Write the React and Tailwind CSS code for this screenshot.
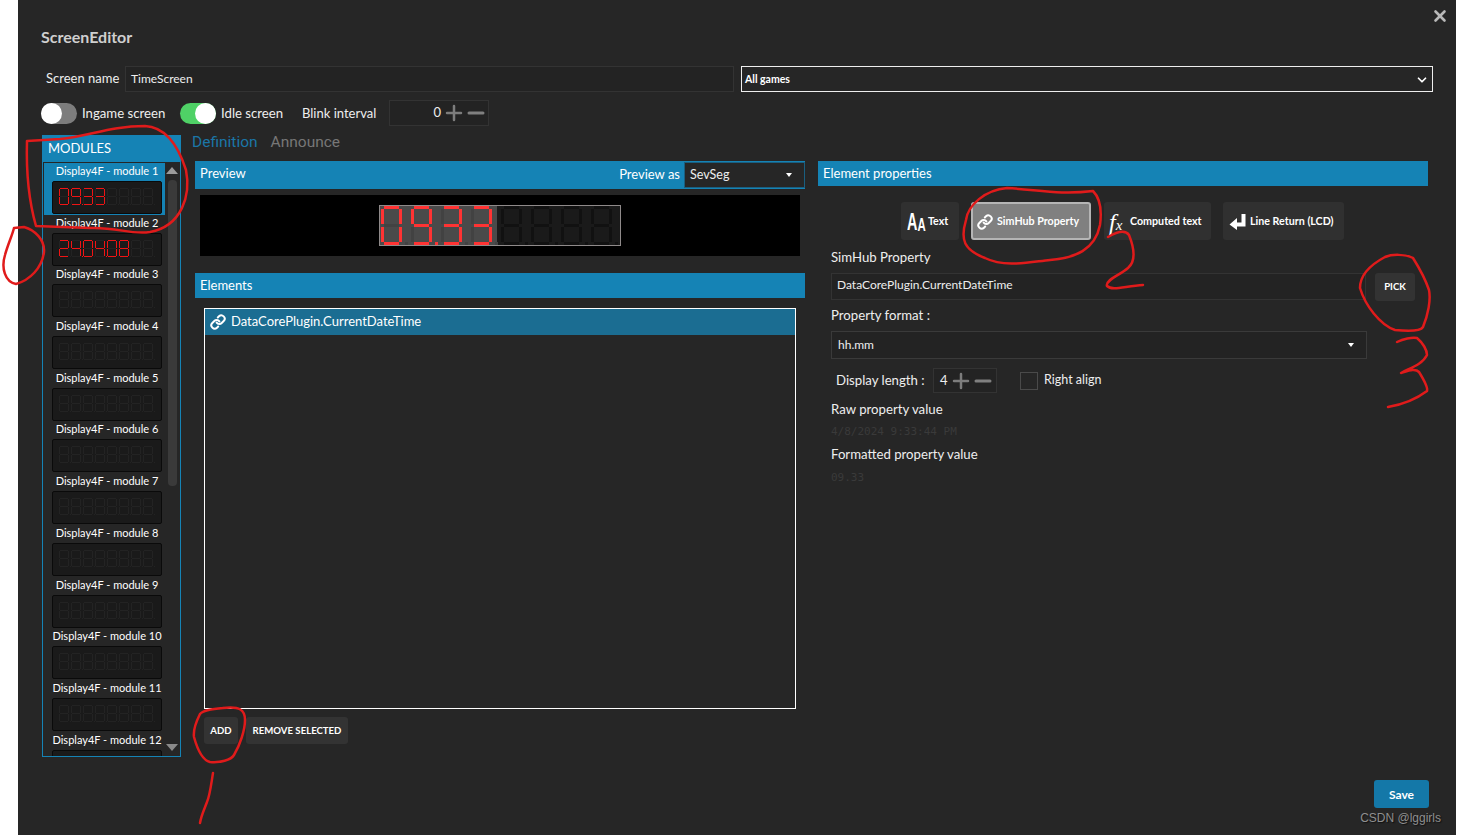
import React from 'react';
import { Link, Plus, Minus, ChevronDown, X } from 'lucide-react';

const FONT = "font-['Lato','Open_Sans',sans-serif]";

// which segments are lit: top, top-left, top-right, middle, bottom-left, bottom-right, bottom
const SEGMENTS = {
  0: [1, 1, 1, 0, 1, 1, 1],
  2: [1, 0, 1, 1, 1, 0, 1],
  3: [1, 0, 1, 1, 0, 1, 1],
  4: [0, 1, 1, 1, 0, 1, 0],
  8: [1, 1, 1, 1, 1, 1, 1],
  9: [1, 1, 1, 1, 0, 1, 1],
};

const Digit = ({ x, y, w, h, t, value, dot, on, off }) => {
  const lit = SEGMENTS[value] || [];
  const half = (h - t) / 2;
  const rects = [
    [x + t, y, w - 2 * t, t],
    [x, y + t, t, half - t],
    [x + w - t, y + t, t, half - t],
    [x + t, y + half, w - 2 * t, t],
    [x, y + half + t, t, half - t],
    [x + w - t, y + half + t, t, half - t],
    [x + t, y + h - t, w - 2 * t, t],
  ];
  return (
    <>
      {rects.map((r, i) => (
        <rect key={i} x={r[0]} y={r[1]} width={r[2]} height={r[3]} fill={lit[i] ? on : off} />
      ))}
      <rect x={x + w + t} y={y + h - t} width={t} height={t} fill={dot ? on : off} />
    </>
  );
};

const SmallDisplay = ({ digits = '', dots = [] }) => (
  <div className="h-[33px] w-[110px] rounded-[2px] border border-[#0a0a0a] bg-[#1a1a1a]">
    <svg width="108" height="31" viewBox="0 0 108 31" className="block">
      {[0, 1, 2, 3, 4, 5, 6, 7].map(i => (
        <Digit
          key={i}
          x={6 + i * 12}
          y={6}
          w={10}
          h={17}
          t={1}
          value={digits[i]}
          dot={dots.includes(i)}
          on="#f01414"
          off="#232323"
        />
      ))}
    </svg>
  </div>
);

const BigDisplay = () => (
  <div className="h-[41px] w-[242px] border border-[#8f8a8a] bg-[#1a1a1a]">
    <svg width="240" height="39" viewBox="0 0 240 39" className="block">
      <rect x="0" y="0" width="117" height="39" fill="#4a4a4a" />
      {[0, 1, 2, 3, 4, 5, 6, 7].map(i => (
        <Digit
          key={i}
          x={1 + i * 30}
          y={0}
          w={21}
          h={39}
          t={3}
          value={'0933'[i]}
          dot={i === 1}
          on="#ff3333"
          off={i < 4 ? '#424242' : '#111111'}
        />
      ))}
    </svg>
  </div>
);

const modules = [
  { n: 1, digits: '0933', dots: [1] },
  { n: 2, digits: '240408', dots: [1, 3] },
  { n: 3 }, { n: 4 }, { n: 5 }, { n: 6 }, { n: 7 }, { n: 8 }, { n: 9 }, { n: 10 }, { n: 11 }, { n: 12 },
];

const ModuleList = () => (
  <div className="w-[139px] h-[622px] border border-[#1583b5] flex flex-col">
    <div className="h-[26px] shrink-0 bg-[#1583b5] text-[13px] leading-[25px] pl-[5px] text-white">MODULES</div>
    <div className="relative flex-1 overflow-hidden pt-[1px] pl-[1px]">
      {modules.map(m => (
        <div
          key={m.n}
          className={`w-[121px] h-[51.7px] pl-[5px] flex flex-col items-center ${m.n === 1 ? 'bg-[#1583b5]' : ''}`}
        >
          <div className="h-[18px] text-[11px] leading-[16px] text-white whitespace-nowrap">Display4F - module {m.n}</div>
          <SmallDisplay digits={m.digits} dots={m.dots} />
        </div>
      ))}
      {/* scrollbar */}
      <div className="absolute right-[3px] top-[5px] bottom-[5px] w-[10px] flex flex-col items-center">
        <div className="w-0 h-0 border-x-[6px] border-x-transparent border-b-[7px] border-b-[#9a9a9a]" />
        <div className="mt-[6px] h-[306px] w-[9px] rounded-[4px] bg-[#3a3a3a]" />
        <div className="mt-auto w-0 h-0 border-x-[6px] border-x-transparent border-t-[7px] border-t-[#8a8a8a]" />
      </div>
    </div>
  </div>
);

const Toggle = ({ on }) => (
  <div className={`mt-[1px] w-[36px] h-[21px] rounded-full flex items-center ${on ? 'bg-[#4fd166] justify-end' : 'bg-[#7d7d7d] justify-start'}`}>
    <div className="w-[21px] h-[21px] rounded-full bg-white" />
  </div>
);

const Stepper = ({ value, className }) => (
  <div className={`flex items-center border border-[#333333] bg-[#232323] text-[13px] text-[#eeeeee] ${className}`}>
    <span>{value}</span>
    <Plus size={24} strokeWidth={2.5} color="#7d7d7d" className="ml-[1px]" />
    <Minus size={24} strokeWidth={3} color="#808080" className="-ml-[2px]" />
  </div>
);

const SectionBar = ({ children, className = '' }) => (
  <div className={`bg-[#1583b5] text-[13px] text-white flex items-center pl-[5px] ${className}`}>{children}</div>
);

const SmallBtn = ({ children, className = '' }) => (
  <button className={`h-[27px] pt-[1px] rounded-[3px] bg-[#333333] text-[9.6px] font-bold text-white ${className}`}>{children}</button>
);

const Caret = ({ className = '' }) => (
  <div className={`w-0 h-0 border-x-[3.5px] border-x-transparent border-t-[4px] border-t-white ${className}`} />
);

const ToolBtn = ({ children, active, className = '' }) => (
  <button
    className={`h-[38px] pt-[1px] rounded-[3px] flex items-center text-[10.7px] font-bold text-white ${
      active ? 'bg-[#808080] border-2 border-[#b5b5b5]' : 'bg-[#303030]'
    } ${className}`}
  >
    {children}
  </button>
);

const Annotations = () => (
  <svg
    width="1457"
    height="835"
    viewBox="0 0 1457 835"
    fill="none"
    stroke="#e01b1b"
    strokeWidth="2.5"
    strokeLinecap="round"
    strokeLinejoin="round"
    className="absolute left-0 top-0 pointer-events-none"
  >
    <path d="M27 141 L60 139 C90 136 110 126 145 126 C165 127 178 145 186 170 C191 195 182 226 150 232 C130 235 118 227 90 228 L36 226 C30 205 26 175 27 141" />
    <path d="M14 228 L24 227 C35 230 45 240 44 252 C42 268 30 280 16 284 C5 282 1 268 5 255 C8 244 12 236 14 228" />
    <path d="M1093 191 C1060 195 1040 190 1007 188 C985 190 968 205 966 220 C960 240 964 250 985 258 C1005 268 1030 262 1050 260 C1075 258 1095 250 1100 225 C1102 210 1100 198 1093 191" />
    <path d="M1108 237 C1115 233 1125 229 1129 235 C1135 250 1135 262 1128 268 C1120 275 1105 280 1107 286 C1112 291 1125 286 1143 285" />
    <path d="M1413 258 C1405 254 1392 254 1385 257 C1370 265 1360 275 1360 288 C1365 305 1380 325 1395 330 C1405 331 1420 332 1423 327 C1428 315 1431 300 1429 290 C1425 278 1418 266 1413 258" />
    <path d="M1397 342 C1403 339 1412 337 1417 338 C1423 343 1427 350 1427 355 C1422 365 1410 368 1401 373 C1408 371 1415 368 1419 372 C1424 380 1428 388 1427 391 C1415 400 1400 405 1388 407" />
    <path d="M223 708 C212 709 203 710 200 714 C196 722 193 730 194 737 C197 748 202 760 210 762 C220 763 231 760 234 755 C240 745 245 730 245 720 C245 710 240 706 223 708" />
    <path d="M213 773 C211 785 210 795 207 802 C204 810 201 816 200 823" />
  </svg>
);

const App = () => {
  return (
    <div className={`relative w-[1457px] h-[835px] overflow-hidden flex bg-white text-[13px] text-[#eeeeee] ${FONT}`}>
      <div className="w-[18px] shrink-0 bg-white" />
      <div className="relative flex-1 mr-[1px] bg-[#262626] pl-[23px] pt-[25px] flex flex-col">
        <button className="absolute right-[7px] top-[7px] text-[#b8b8b8]">
          <X size={18} strokeWidth={3.5} />
        </button>

        <h1 className="h-[23px] text-[16px] leading-[23px] font-bold text-[#cfcfcf]">ScreenEditor</h1>

        {/* name row */}
        <div className="mt-[18px] flex h-[26px] items-center">
          <span className="ml-[5px] w-[79px] whitespace-nowrap">Screen name</span>
          <div className="h-[26px] w-[609px] border border-[#333333] bg-[#232323] pl-[5px] text-[12px] leading-[23px]">TimeScreen</div>
          <div className="ml-[7px] h-[26px] w-[692px] pt-[1px] border border-[#eeeeee] bg-[#262626] px-[3px] flex items-center justify-between text-[10.5px] font-bold text-white">
            All games
            <ChevronDown size={14} strokeWidth={3} />
          </div>
        </div>

        {/* switches row */}
        <div className="mt-[8px] flex h-[26px] items-center">
          <Toggle />
          <span className="mt-[2px] ml-[5px] w-[98px] text-[13.2px] whitespace-nowrap">Ingame screen</span>
          <Toggle on />
          <span className="mt-[2px] ml-[5px] w-[81px] text-[13.2px] whitespace-nowrap">Idle screen</span>
          <span className="mt-[2px] w-[87px] whitespace-nowrap">Blink interval</span>
          <Stepper value="0" className="w-[100px] h-[26px] justify-end" />
        </div>

        {/* main area */}
        <div className="mt-[9px] flex pl-[1px]">
          <ModuleList />
          <div className="ml-[11px] flex flex-col">
            <div className="h-[26px] flex items-start font-['Roboto',sans-serif] text-[15.5px] leading-[14px]">
              <span className="text-[#1b76a8]">Definition</span>
              <span className="ml-[13px] text-[#777777]">Announce</span>
            </div>

            <div className="flex pl-[3px]">
              {/* preview + elements */}
              <div className="w-[610px] flex flex-col">
                <SectionBar className="h-[28px] justify-between pr-0">
                  <span className="-mt-[2px]">Preview</span>
                  <div className="flex items-center">
                    <span className="mr-[4px]">Preview as</span>
                    <div className="h-[26px] w-[121px] border border-[#1a5f80] bg-[#262626] px-[5px] flex items-center justify-between text-[12.5px] text-[#eeeeee]">
                      SevSeg
                      <Caret className="mr-[7px]" />
                    </div>
                  </div>
                </SectionBar>
                <div className="mx-[5px] mt-[6px] h-[61px] w-[600px] bg-black pt-[10px] pl-[179px]">
                  <BigDisplay />
                </div>
                <SectionBar className="mt-[17px] h-[25px]">Elements</SectionBar>
                <div className="mt-[10px] ml-[9px] h-[401px] w-[592px] border border-white">
                  <div className="h-[26px] bg-[#1b6d92] flex items-center pl-[5px] text-white">
                    <Link size={16} strokeWidth={3} className="mr-[5px]" />
                    DataCorePlugin.CurrentDateTime
                  </div>
                </div>
                <div className="mt-[8px] ml-[9px] flex gap-[8px]">
                  <SmallBtn className="w-[34px]">ADD</SmallBtn>
                  <SmallBtn className="w-[102px]">REMOVE SELECTED</SmallBtn>
                </div>
              </div>

              {/* element properties */}
              <div className="ml-[13px] w-[610px] flex flex-col">
                <SectionBar className="h-[25px]">Element properties</SectionBar>
                <div className="mt-[16px] flex pl-[83px]">
                  <ToolBtn className="w-[58px] pl-[6px]">
                    <span className="w-[16px] flex items-end origin-left scale-x-[0.6] font-['Liberation_Sans',sans-serif] font-bold leading-none">
                      <span className="text-[24px]">A</span>
                      <span className="text-[19px]">A</span>
                    </span>
                    <span className="ml-[5px]">Text</span>
                  </ToolBtn>
                  <ToolBtn active className="ml-[12px] w-[120px] pl-[4px]">
                    <Link size={16} strokeWidth={3} className="mr-[4px]" />
                    SimHub Property
                  </ToolBtn>
                  <ToolBtn className="ml-[13px] w-[107px] pl-[5px]">
                    <span className="w-[21px] font-['Liberation_Serif',serif] italic text-[24px] font-normal leading-none text-left">f<span className="text-[15px]">x</span></span>
                    Computed text
                  </ToolBtn>
                  <ToolBtn className="ml-[12px] w-[121px] pl-[6px]">
                    <svg width="18" height="18" viewBox="0 0 18 18" fill="white" className="mr-[3px]">
                      <path d="M12.5 1h4v12.5H8V17L0.5 11.5 8 5v4.5h4.5z" />
                    </svg>
                    Line Return (LCD)
                  </ToolBtn>
                </div>

                <div className="pl-[13px] flex flex-col text-[13.2px]">
                  <label className="mt-[8px] h-[18px] leading-[18px]">SimHub Property</label>
                  <div className="mt-[7px] flex items-start">
                    <div className="h-[27px] w-[535px] border border-[#333333] bg-[#232323] pl-[5px] text-[12px] leading-[22px]">DataCorePlugin.CurrentDateTime</div>
                    <SmallBtn className="ml-[9px] w-[40px] h-[28px]">PICK</SmallBtn>
                  </div>
                  <label className="mt-[5px] h-[18px] leading-[18px]">Property format :</label>
                  <div className="mt-[7px] h-[28px] w-[536px] border border-[#3a3a3a] bg-[#232323] pl-[6px] pr-[12px] flex items-center justify-between text-[12px]">
                    hh.mm
                    <Caret />
                  </div>
                  <div className="mt-[9px] h-[25px] flex items-center pl-[5px]">
                    <span className="w-[97px] whitespace-nowrap">Display length :</span>
                    <Stepper value="4" className="w-[64px] h-[25px] pl-[6px]" />
                    <div className="ml-[23px] h-[18px] w-[18px] border border-[#4a4a4a]" />
                    <span className="ml-[6px] text-[12.5px]">Right align</span>
                  </div>
                  <label className="mt-[7px] h-[18px] leading-[18px]">Raw property value</label>
                  <div className="mt-[6px] h-[16px] leading-[16px] font-['DejaVu_Sans_Mono',monospace] text-[11px] text-[#3a3a3a]">4/8/2024 9:33:44 PM</div>
                  <label className="mt-[5px] h-[18px] leading-[18px]">Formatted property value</label>
                  <div className="mt-[7px] h-[16px] leading-[16px] font-['DejaVu_Sans_Mono',monospace] text-[11px] text-[#3a3a3a]">09.33</div>
                </div>
              </div>
            </div>
          </div>
        </div>

        <div className="mt-[23px] flex justify-end pr-[27px]">
          <button className="h-[28px] w-[55px] pt-[1px] rounded-[3px] bg-[#1478a8] text-[12px] font-bold text-white">Save</button>
        </div>
      </div>

      <Annotations />
      <span className="absolute right-[16px] top-[810px] text-[12px] leading-[16px] font-['Liberation_Sans',sans-serif] text-[#8f8f8f] [text-shadow:1px_1px_1px_#111]">CSDN @lggirls</span>
    </div>
  );
};

export default App;
